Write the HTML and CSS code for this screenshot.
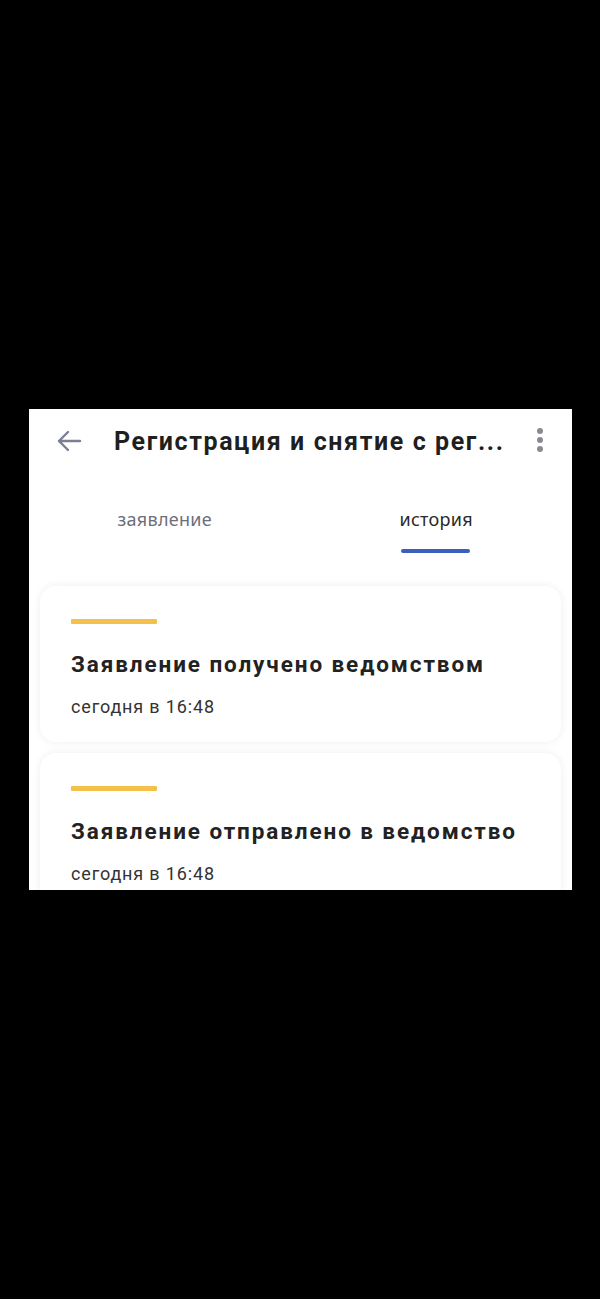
FILE: index.html
```html
<!DOCTYPE html>
<html lang="ru">
<head>
<meta charset="utf-8">
<link rel="stylesheet" href="styles.css">
</head>
<body>
<div class="screen">
  <div class="panel">
    <header class="topbar">
      <svg class="back" width="26" height="22" viewBox="0 0 26 22"><path d="M24 11H3M12 2L3 11l9 9" fill="none" stroke="#7b7f94" stroke-width="2.4" stroke-linecap="round" stroke-linejoin="round"/></svg>
      <h1 class="title">Регистрация и снятие с рег...</h1>
      <div class="more"><span></span><span></span><span></span></div>
    </header>
    <nav class="tabs">
      <div class="tab">заявление</div>
      <div class="tab active">история</div>
    </nav>
    <main class="list">
      <section class="card">
        <div class="bar"></div>
        <div class="ctitle">Заявление получено ведомством</div>
        <div class="ctime">сегодня в 16:48</div>
      </section>
      <section class="card">
        <div class="bar"></div>
        <div class="ctitle">Заявление отправлено в ведомство</div>
        <div class="ctime">сегодня в 16:48</div>
      </section>
    </main>
  </div>
</div>
</body>
</html>
```
FILE: styles.css
```css
html, body { margin: 0; padding: 0; background: #000; }
body { font-family: Roboto, "Noto Sans", sans-serif; }
.screen { width: 600px; height: 1299px; padding-top: 409px; box-sizing: border-box; }
.panel { margin-left: 29px; width: 543px; height: 481px; background: #fff; overflow: hidden; display: flex; flex-direction: column; }
.topbar { flex: none; height: 64px; display: flex; align-items: center; padding: 0 0 0 27px; }
.back { flex: none; }
.title { margin: 0 0 0 32px; font-size: 25px; font-weight: 700; color: #1f1f1f; white-space: nowrap; flex: 1; letter-spacing: 1.6px; }
.more { width: 6px; display: flex; flex-direction: column; gap: 3px; margin-right: 29px; margin-top: -2px; }
.more span { width: 6px; height: 6px; border-radius: 50%; background: #8a8a90; }
.tabs { flex: none; display: flex; height: 82px; }
.tab { flex: 1; text-align: center; font-family: "Noto Sans", sans-serif; font-size: 18px; letter-spacing: 0.3px; color: #6b6f7b; padding-top: 34px; box-sizing: border-box; position: relative; }
.tab.active { color: #2a2a2a; }
.tab.active::after { content: ""; position: absolute; left: 50%; margin-left: -35px; width: 69px; height: 4px; top: 76px; background: #3a5fbf; border-radius: 2px; }
.list { flex: 1; min-height: 0; background: #fff; padding: 31px 11px 0; display: flex; flex-direction: column; gap: 11px; }
.card { flex: none; background: #fff; border-radius: 16px; padding: 33px 31px 25px; box-shadow: 0 0 8px rgba(0,0,0,0.07); }
.bar { width: 86px; height: 5px; background: #f2c04b; border-radius: 1px; }
.ctitle { margin-top: 27px; font-size: 22.5px; font-weight: 700; color: #222; letter-spacing: 1.9px; }
.ctime { margin-top: 19px; font-size: 18px; color: #333; letter-spacing: 0.85px; }
```
